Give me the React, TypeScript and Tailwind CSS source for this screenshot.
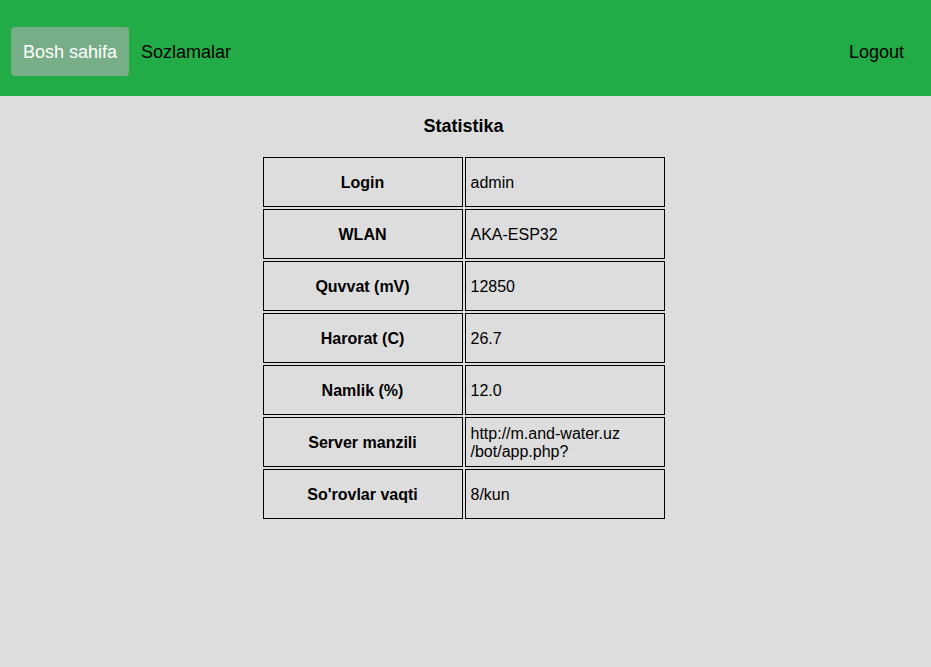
import React from "react";

const rows: [string, React.ReactNode][] = [
  ["Login", "admin"],
  ["WLAN", "AKA-ESP32"],
  ["Quvvat (mV)", "12850"],
  ["Harorat (C)", "26.7"],
  ["Namlik (%)", "12.0"],
  ["Server manzili", <>http://m.and-water.uz<br />/bot/app.php?</>],
  ["So'rovlar vaqti", "8/kun"],
];

export default function App() {
  return (
    <div className="min-h-[667px] bg-[#dddddd] text-black" style={{ fontFamily: '"Liberation Sans", Arial, sans-serif' }}>
      <div className="h-[96px] bg-[#22ab46] flex items-center px-[11px] pt-[7px]">
        <div className="h-[49px] px-[12px] flex items-center rounded-[4px] bg-[#78ae87] text-white text-[18px] leading-[22px] pt-[1px]">Bosh sahifa</div>
        <div className="ml-[12px] px-0 text-[18px] leading-[22px] pt-[1px] text-black">Sozlamalar</div>
        <div className="ml-auto mr-[16px] text-[18px] leading-[22px] pt-[1px] text-black">Logout</div>
      </div>
      <div className="flex flex-col items-center pr-[4px]">
        <h3 className="mt-[20px] mb-[18px] text-[18px] font-bold leading-[21px]">Statistika</h3>
        <table className="border-separate border-spacing-[2px] text-[16px]">
          <tbody>
            {rows.map(([k, v]) => (
              <tr key={k}>
                <td className="w-[200px] h-[50px] border border-black text-center font-bold align-middle px-[5px] pt-[2px] leading-[18px]">{k}</td>
                <td className="w-[200px] h-[50px] border border-black align-middle px-[5px] pt-[2px] leading-[18px]">{v}</td>
              </tr>
            ))}
          </tbody>
        </table>
      </div>
    </div>
  );
}
